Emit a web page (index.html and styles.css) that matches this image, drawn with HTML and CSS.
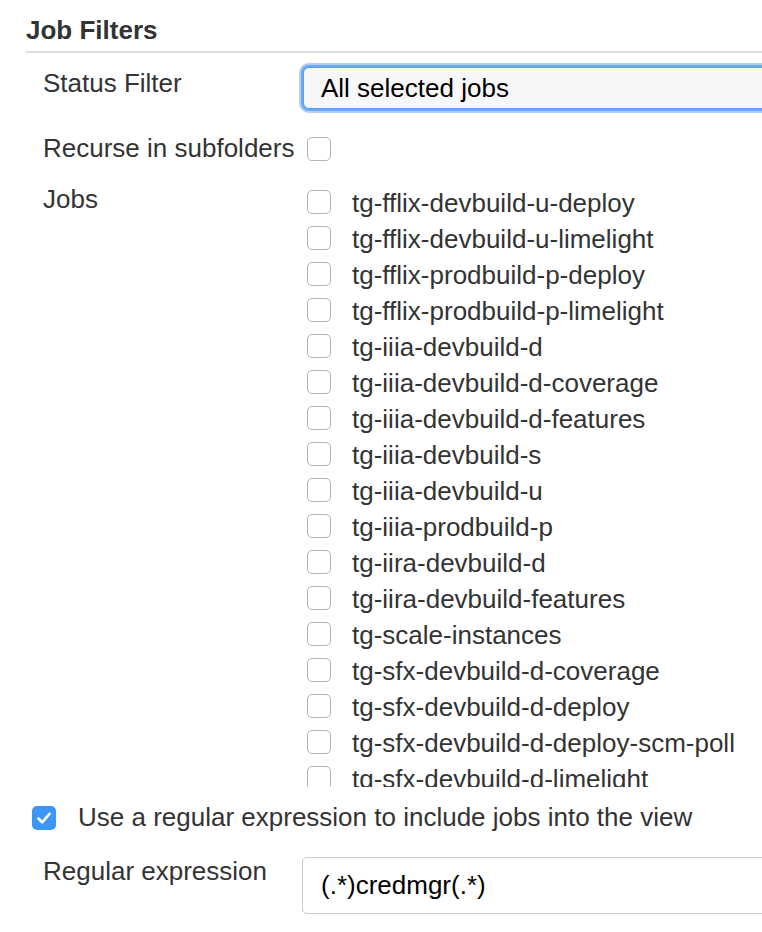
FILE: index.html
```html
<!DOCTYPE html>
<html lang="en">
<head>
<meta charset="utf-8">
<title>Job Filters</title>
<link rel="stylesheet" href="styles.css">
</head>
<body>
<div class="page">
  <div class="section-title">Job Filters</div>

  <div class="row row-status">
    <div class="label">Status Filter</div>
    <div class="control">
      <div class="select">All selected jobs</div>
    </div>
  </div>

  <div class="row row-recurse">
    <div class="label">Recurse in subfolders</div>
    <div class="control">
      <span class="cb cb-recurse"></span>
    </div>
  </div>

  <div class="row row-jobs">
    <div class="label">Jobs</div>
    <div class="control">
      <div class="job-list">
        <div class="job"><span class="cb"></span><span class="job-name">tg-fflix-devbuild-u-deploy</span></div>
        <div class="job"><span class="cb"></span><span class="job-name">tg-fflix-devbuild-u-limelight</span></div>
        <div class="job"><span class="cb"></span><span class="job-name">tg-fflix-prodbuild-p-deploy</span></div>
        <div class="job"><span class="cb"></span><span class="job-name">tg-fflix-prodbuild-p-limelight</span></div>
        <div class="job"><span class="cb"></span><span class="job-name">tg-iiia-devbuild-d</span></div>
        <div class="job"><span class="cb"></span><span class="job-name">tg-iiia-devbuild-d-coverage</span></div>
        <div class="job"><span class="cb"></span><span class="job-name">tg-iiia-devbuild-d-features</span></div>
        <div class="job"><span class="cb"></span><span class="job-name">tg-iiia-devbuild-s</span></div>
        <div class="job"><span class="cb"></span><span class="job-name">tg-iiia-devbuild-u</span></div>
        <div class="job"><span class="cb"></span><span class="job-name">tg-iiia-prodbuild-p</span></div>
        <div class="job"><span class="cb"></span><span class="job-name">tg-iira-devbuild-d</span></div>
        <div class="job"><span class="cb"></span><span class="job-name">tg-iira-devbuild-features</span></div>
        <div class="job"><span class="cb"></span><span class="job-name">tg-scale-instances</span></div>
        <div class="job"><span class="cb"></span><span class="job-name">tg-sfx-devbuild-d-coverage</span></div>
        <div class="job"><span class="cb"></span><span class="job-name">tg-sfx-devbuild-d-deploy</span></div>
        <div class="job"><span class="cb"></span><span class="job-name">tg-sfx-devbuild-d-deploy-scm-poll</span></div>
        <div class="job"><span class="cb"></span><span class="job-name">tg-sfx-devbuild-d-limelight</span></div>
      </div>
    </div>
  </div>

  <div class="regex-toggle">
    <span class="cb cb-checked">
      <svg viewBox="0 0 24 24" width="24" height="24"><path d="M6.5 12.5 L10.2 16.3 L17.5 7.8" fill="none" stroke="#fff" stroke-width="2.6" stroke-linecap="round" stroke-linejoin="round"/></svg>
    </span>
    <span class="regex-text">Use a regular expression to include jobs into the view</span>
  </div>

  <div class="row row-regex">
    <div class="label">Regular expression</div>
    <div class="control">
      <div class="text-input">(.*)credmgr(.*)</div>
    </div>
  </div>
</div>
</body>
</html>
```

FILE: styles.css
```css
html, body {
  margin: 0;
  padding: 0;
  background: #fff;
  overflow: hidden;
}

body {
  font-family: "Liberation Sans", Arial, Helvetica, sans-serif;
  font-size: 26px;
  line-height: 30px;
  color: #333;
}

.page {
  width: 1100px;
  padding-left: 26px;
}

.section-title {
  font-weight: bold;
  margin-top: 15px;
  padding-bottom: 6px;
  border-bottom: 2px solid #e0e0e0;
}

.row {
  display: flex;
  align-items: flex-start;
}

.label {
  flex: 0 0 276px;
  padding-left: 17px;
  box-sizing: border-box;
  white-space: nowrap;
}

.control {
  flex: 1 1 auto;
}

.row-status {
  margin-top: 14px;
}

.row-status .label {
  padding-top: 1px;
}

.select {
  margin-left: 1px;
  height: 42px;
  box-sizing: border-box;
  border: 1px solid #5a9cee;
  border-radius: 6px;
  background: #f7f7f7;
  box-shadow: 0 0 0 2px #6ea8f1, 0 0 0 4px #afcff6;
  color: #000;
  padding-left: 17px;
  line-height: 40px;
}

.row-recurse {
  margin-top: 24px;
}

.cb {
  display: inline-block;
  box-sizing: border-box;
  width: 24px;
  height: 24px;
  border: 1px solid #b4b4b4;
  border-radius: 5px;
  background: #fff;
  flex: 0 0 auto;
}

.cb-recurse {
  margin-left: 5px;
  margin-top: 4px;
  vertical-align: top;
}

.row-jobs {
  margin-top: 18px;
}

.row-jobs .label {
  padding-top: 3px;
}

.job-list {
  margin-top: 4px;
  height: 602px;
  overflow: hidden;
}

.job {
  display: flex;
  align-items: center;
  height: 36px;
  line-height: 36px;
  padding-left: 5px;
  white-space: nowrap;
}

.job .cb {
  margin-top: -2px;
}

.job-name {
  margin-left: 21px;
}

.regex-toggle {
  display: flex;
  align-items: center;
  margin-top: 15px;
  padding-left: 6px;
  height: 30px;
}

.cb-checked {
  border: none;
  background: #3d95f7;
  display: flex;
  align-items: center;
  justify-content: center;
  margin-top: 1px;
}

.cb-checked svg {
  display: block;
}

.regex-text {
  margin-left: 22px;
  white-space: nowrap;
}

.row-regex {
  margin-top: 24px;
}

.text-input {
  margin-left: 0;
  margin-top: 1px;
  height: 57px;
  box-sizing: border-box;
  border: 1px solid #cbcbcb;
  border-radius: 5px;
  background: #fff;
  color: #000;
  padding-left: 18px;
  line-height: 55px;
  white-space: nowrap;
}
```
